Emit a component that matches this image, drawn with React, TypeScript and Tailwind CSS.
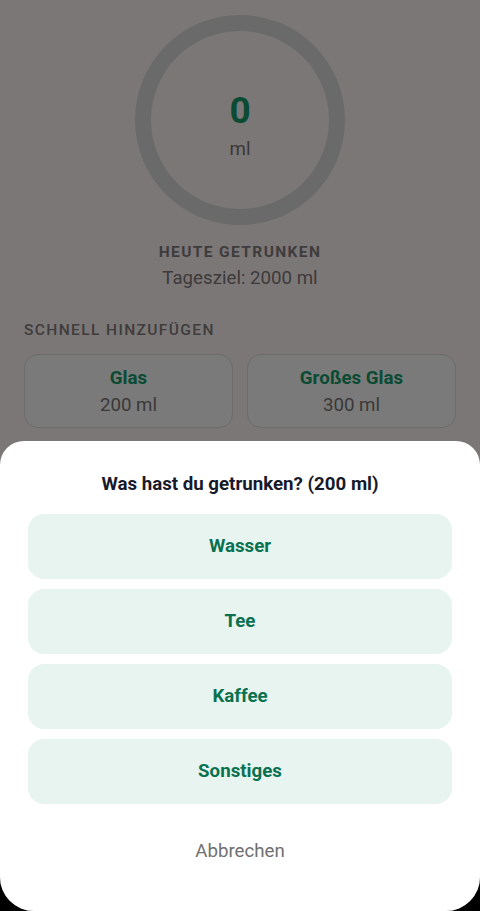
import { useState } from 'react'

const drinks = ['Wasser', 'Tee', 'Kaffee', 'Sonstiges']

const quickAdd = [
  { label: 'Glas', amount: 200 },
  { label: 'Großes Glas', amount: 300 },
]

function ProgressRing({ value }: { value: number }) {
  return (
    <div className="relative w-[210px] h-[210px]">
      <svg width="210" height="210" viewBox="0 0 210 210">
        <circle cx="105" cy="105" r="97" fill="none" stroke="#6b6a6a" strokeWidth="16" />
      </svg>
      <div className="absolute inset-0 flex flex-col items-center justify-center pt-[12px]">
        <div className="text-[37px] leading-[40px] font-bold text-[#0b4a33]">{value}</div>
        <div className="text-[18.7px] leading-[24px] text-[#3a3838] mt-[6px]">ml</div>
      </div>
    </div>
  )
}

export default function App() {
  const [total] = useState(0)
  const [pending] = useState(200)

  return (
    <div className="w-[480px] h-[911px] bg-black" style={{ fontFamily: 'Roboto, "Noto Sans", sans-serif' }}>
      <div className="relative w-full h-full overflow-hidden rounded-b-[34px] bg-[#7c7777]">
        {/* Dimmed background screen */}
        <div className="flex flex-col items-center pt-[15px]">
          <ProgressRing value={total} />
          <div className="mt-[17px] text-[15.5px] leading-[20px] font-bold tracking-[0.09em] text-[#3e3c3c]">
            HEUTE GETRUNKEN
          </div>
          <div className="mt-[4px] text-[18.7px] leading-[24px] text-[#3c3a3a]">Tagesziel: 2000 ml</div>
        </div>

        <div className="px-6 mt-[30px]">
          <div className="text-[15.5px] leading-[20px] font-medium tracking-[0.09em] text-[#3e3c3c]">
            SCHNELL HINZUFÜGEN
          </div>
          <div className="grid grid-cols-2 gap-x-[14px] mt-[14px]">
            {quickAdd.map((q) => (
              <div
                key={q.label}
                className="h-[74px] rounded-[14px] border border-[#6d6b6b] bg-[#7a7a7a] flex flex-col items-center justify-center"
              >
                <div className="text-[18.7px] leading-[24px] font-bold text-[#0b4a33]">{q.label}</div>
                <div className="text-[18.7px] leading-[24px] text-[#3a3838] mt-[3px]">{q.amount} ml</div>
              </div>
            ))}
          </div>
        </div>

        {/* Bottom sheet */}
        <div className="absolute left-0 right-0 bottom-0 h-[470px] bg-white rounded-t-[24px] px-7 pt-[31px]">
          <div className="text-center text-[18.7px] leading-[24px] font-bold text-[#171a2b]">
            Was hast du getrunken? ({pending} ml)
          </div>
          <div className="flex flex-col gap-[10px] mt-[18px]">
            {drinks.map((d) => (
              <button
                key={d}
                className="h-[65px] w-full rounded-[16px] bg-[#e7f4ef] text-[18.7px] font-bold text-[#0a7150]"
              >
                {d}
              </button>
            ))}
          </div>
          <div className="mt-[35px] text-center text-[18.7px] leading-[24px] text-[#707070]">Abbrechen</div>
        </div>
      </div>
    </div>
  )
}
